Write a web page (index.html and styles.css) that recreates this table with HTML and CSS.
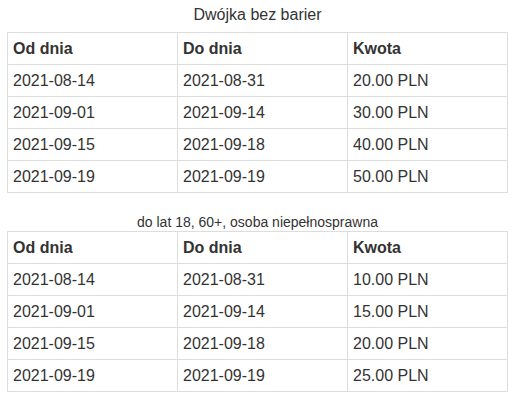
FILE: index.html
```html
<!DOCTYPE html>
<html lang="pl">
<head>
<meta charset="utf-8">
<title>Cennik</title>
<link rel="stylesheet" href="styles.css">
</head>
<body>
<div class="page">
  <table class="prices">
    <caption class="cap-main">Dwójka bez barier</caption>
    <colgroup><col class="c1"><col class="c2"><col class="c3"></colgroup>
    <thead>
      <tr><th>Od dnia</th><th>Do dnia</th><th>Kwota</th></tr>
    </thead>
    <tbody>
      <tr><td>2021-08-14</td><td>2021-08-31</td><td>20.00 PLN</td></tr>
      <tr><td>2021-09-01</td><td>2021-09-14</td><td>30.00 PLN</td></tr>
      <tr><td>2021-09-15</td><td>2021-09-18</td><td>40.00 PLN</td></tr>
      <tr><td>2021-09-19</td><td>2021-09-19</td><td>50.00 PLN</td></tr>
    </tbody>
  </table>
  <table class="prices second">
    <caption class="cap-sub">do lat 18, 60+, osoba niepełnosprawna</caption>
    <colgroup><col class="c1"><col class="c2"><col class="c3"></colgroup>
    <thead>
      <tr><th>Od dnia</th><th>Do dnia</th><th>Kwota</th></tr>
    </thead>
    <tbody>
      <tr><td>2021-08-14</td><td>2021-08-31</td><td>10.00 PLN</td></tr>
      <tr><td>2021-09-01</td><td>2021-09-14</td><td>15.00 PLN</td></tr>
      <tr><td>2021-09-15</td><td>2021-09-18</td><td>20.00 PLN</td></tr>
      <tr><td>2021-09-19</td><td>2021-09-19</td><td>25.00 PLN</td></tr>
    </tbody>
  </table>
</div>
</body>
</html>
```
FILE: styles.css
```css
html, body {
  margin: 0;
  padding: 0;
  background: #fff;
}
body {
  font-family: "Liberation Sans", Arial, sans-serif;
  color: #333;
  font-size: 16px;
}
.page {
  padding: 0 7px;
}
.prices {
  width: 500px;
  border-collapse: collapse;
  table-layout: fixed;
}
.prices.second {
  margin-top: 20px;
}
.c1 { width: 170px; }
.c2 { width: 170px; }
.c3 { width: 160px; }
.cap-main {
  font-size: 16px;
  line-height: 24px;
  padding: 3px 0 5px;
  text-align: center;
}
.cap-sub {
  font-size: 14px;
  line-height: 18px;
  padding: 0;
  text-align: center;
}
.prices th,
.prices td {
  border: 1px solid #ddd;
  padding: 4px 5px;
  line-height: 23px;
  text-align: left;
  font-size: 16px;
}
.prices th {
  font-weight: bold;
}
```
